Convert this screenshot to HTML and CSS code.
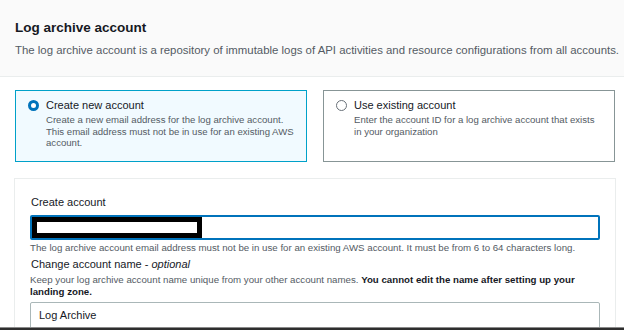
FILE: index.html
```html
<!DOCTYPE html>
<html lang="en">
<head>
  <meta charset="UTF-8" />
  <title>Log archive account</title>
  <link rel="stylesheet" href="styles.css">
</head>
<body>
  <div class="page">
    <header class="section-head">
      <h2>Log archive account</h2>
      <p>The log archive account is a repository of immutable logs of API activities and resource configurations from all accounts.</p>
    </header>

    <div class="tiles">
      <div class="tile selected">
        <span class="radio"></span>
        <div class="tile-text">
          <div class="tile-label">Create new account</div>
          <div class="tile-desc">Create a new email address for the log archive account.<br>This email address must not be in use for an existing AWS<br>account.</div>
        </div>
      </div>
      <div class="tile">
        <span class="radio"></span>
        <div class="tile-text">
          <div class="tile-label">Use existing account</div>
          <div class="tile-desc">Enter the account ID for a log archive account that exists<br>in your organization</div>
        </div>
      </div>
    </div>

    <div class="panel">
      <div class="field-label">Create account</div>
      <div class="input focused">
        <span class="redact"></span>
      </div>
      <div class="hint">The log archive account email address must not be in use for an existing AWS account. It must be from 6 to 64 characters long.</div>

      <div class="field-label second">Change account name - <i>optional</i></div>
      <div class="hint desc">Keep your log archive account name unique from your other account names. <b>You cannot edit the name after setting up your<br>landing zone.</b></div>
      <div class="input plain">Log Archive</div>
    </div>
  </div>
  <div class="edge"></div>
</body>
</html>
```

FILE: styles.css
```css
body {
  margin: 0;
  font-family: 'Liberation Sans', Arial, sans-serif;
  background: #fff;
  color: #16191f;
}
.page {
  height: 327px;
  overflow: hidden;
}
.section-head {
  background: #fafafa;
  padding: 20px 0 19px 15px;
  border-bottom: 1px solid #eaeded;
}
.section-head h2 {
  margin: 0 0 7px;
  font-size: 13.5px;
  line-height: 16px;
  font-weight: bold;
  color: #16191f;
}
.section-head p {
  margin: 0;
  font-size: 11.4px;
  line-height: 14px;
  color: #545b64;
  white-space: nowrap;
}
.tiles {
  display: flex;
  gap: 16px;
  padding: 13px 0 0 15px;
  width: 600px;
}
.tile {
  flex: 1;
  height: 72px;
  box-sizing: border-box;
  border: 1px solid #879596;
  display: flex;
  gap: 7px;
  padding: 7px 0 0 12px;
}
.tile.selected {
  border-color: #00a1c9;
  background: #f1faff;
}
.radio {
  width: 11px;
  height: 11px;
  box-sizing: border-box;
  border: 1px solid #687078;
  border-radius: 50%;
  background: #fff;
  margin-top: 2px;
  flex: none;
}
.selected .radio {
  border: 3.5px solid #0073bb;
}
.tile-label {
  font-size: 11px;
  line-height: 14px;
  color: #16191f;
}
.tile-desc {
  margin-top: 2px;
  font-size: 9.6px;
  line-height: 11.7px;
  color: #545b64;
  white-space: nowrap;
}
.panel {
  margin: 16px 8px 0 14px;
  border: 1px solid #eaeded;
  padding: 16px 15px 0;
}
.field-label {
  font-size: 11px;
  line-height: 14px;
  color: #16191f;
  padding-left: 1px;
}
.field-label.second {
  margin-top: 3px;
}
.input {
  margin-top: 6px;
  height: 25px;
  box-sizing: border-box;
  border-radius: 2px;
}
.input.focused {
  border: 2px solid #0073bb;
  display: flex;
}
.redact {
  width: 170px;
  height: 21px;
  box-sizing: border-box;
  border: 5px solid #000;
  background: #fff;
}
.input.plain {
  margin-top: 5px;
  height: 30px;
  border: 1px solid #aab7b8;
  padding: 5px 0 0 8px;
  font-size: 11px;
  line-height: 14px;
  color: #16191f;
}
.hint {
  margin-top: 2px;
  font-size: 9.7px;
  line-height: 12px;
  color: #545b64;
  white-space: nowrap;
}
.hint.desc {
  margin-top: 3px;
  line-height: 11.7px;
}
.hint b {
  color: #16191f;
}
.edge {
  height: 3px;
  background: #2e2e2e;
  border-top: 1px solid #8a8a8a;
  box-sizing: border-box;
}
```
